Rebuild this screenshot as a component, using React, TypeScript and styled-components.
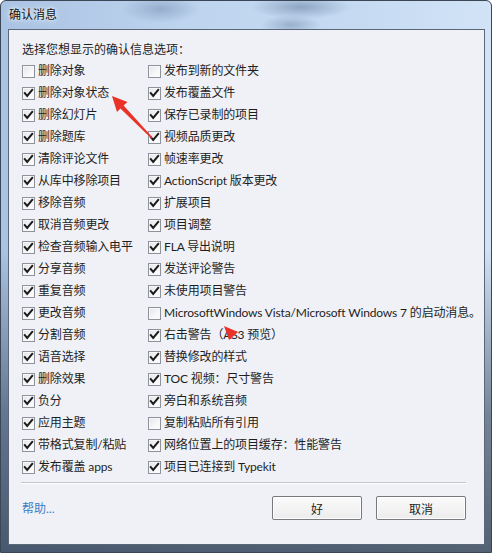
import styled, { createGlobalStyle } from "styled-components";

const GlobalStyle = createGlobalStyle`
  html, body {
    margin: 0;
    padding: 0;
    background: #ffffff;
  }
  * {
    box-sizing: border-box;
  }
`;

type Option = { label: string; checked: boolean };

const leftOptions: Option[] = [
  { label: "删除对象", checked: false },
  { label: "删除对象状态", checked: true },
  { label: "删除幻灯片", checked: true },
  { label: "删除题库", checked: true },
  { label: "清除评论文件", checked: true },
  { label: "从库中移除项目", checked: true },
  { label: "移除音频", checked: true },
  { label: "取消音频更改", checked: true },
  { label: "检查音频输入电平", checked: true },
  { label: "分享音频", checked: true },
  { label: "重复音频", checked: true },
  { label: "更改音频", checked: true },
  { label: "分割音频", checked: true },
  { label: "语音选择", checked: true },
  { label: "删除效果", checked: true },
  { label: "负分", checked: true },
  { label: "应用主题", checked: true },
  { label: "带格式复制/粘贴", checked: true },
  { label: "发布覆盖 apps", checked: true },
];

const rightOptions: Option[] = [
  { label: "发布到新的文件夹", checked: false },
  { label: "发布覆盖文件", checked: true },
  { label: "保存已录制的项目", checked: true },
  { label: "视频品质更改", checked: true },
  { label: "帧速率更改", checked: true },
  { label: "ActionScript 版本更改", checked: true },
  { label: "扩展项目", checked: true },
  { label: "项目调整", checked: true },
  { label: "FLA 导出说明", checked: true },
  { label: "发送评论警告", checked: true },
  { label: "未使用项目警告", checked: true },
  { label: "MicrosoftWindows Vista/Microsoft Windows 7 的启动消息。", checked: false },
  { label: "右击警告（AS3 预览）", checked: true },
  { label: "替换修改的样式", checked: true },
  { label: "TOC 视频：尺寸警告", checked: true },
  { label: "旁白和系统音频", checked: true },
  { label: "复制粘贴所有引用", checked: false },
  { label: "网络位置上的项目缓存：性能警告", checked: true },
  { label: "项目已连接到 Typekit", checked: true },
];

const Window = styled.div`
  position: relative;
  width: 492px;
  height: 553px;
  display: flex;
  flex-direction: column;
  padding: 0 6px 7px 7px;
  border: 1px solid #3b4656;
  border-radius: 6px 6px 0 0;
  background:
    radial-gradient(ellipse 40px 14px at 160px 8px, rgba(120, 145, 180, 0.55), transparent),
    radial-gradient(ellipse 50px 12px at 300px 6px, rgba(90, 115, 150, 0.5), transparent),
    radial-gradient(ellipse 30px 10px at 290px 24px, rgba(90, 115, 150, 0.4), transparent),
    linear-gradient(180deg, rgba(0, 0, 0, 0) 0%, rgba(0, 0, 0, 0) 45%, rgba(40, 55, 75, 0.55) 75%, rgba(30, 42, 60, 0.7) 100%),
    linear-gradient(90deg, #aac3e3 0%, #bfd5ef 40%, #c6dbf2 75%, #d2e3f6 100%);
  font-family: Lato, "Noto Sans CJK SC", sans-serif;
  font-size: 12px;
  color: #1e1e1e;
`;

const TitleBar = styled.div`
  height: 28px;
  display: flex;
  align-items: center;
  padding-left: 1px;
`;

const Title = styled.span`
  font-size: 12px;
  line-height: 16px;
  color: #111;
  text-shadow: 0 0 6px rgba(255, 255, 255, 0.9), 0 0 3px rgba(255, 255, 255, 0.9);
`;

const Client = styled.div`
  flex: 1;
  display: flex;
  flex-direction: column;
  border: 1px solid #5b6777;
  background: #f0f1f6;
  padding: 12px 18px 0 13px;
`;

const Prompt = styled.div`
  line-height: 16px;
  height: 16px;
`;

const Options = styled.div`
  margin-top: 2px;
  display: grid;
  grid-template-columns: 126px 1fr;
  grid-auto-flow: column;
  grid-template-rows: repeat(19, 22px);
`;

const Row = styled.label`
  display: flex;
  align-items: center;
  gap: 3px;
  white-space: nowrap;
  line-height: 16px;
  letter-spacing: -0.15px;
`;

const Box = styled.span`
  flex: none;
  width: 13px;
  height: 13px;
  border: 1px solid #8e929b;
  background: linear-gradient(135deg, #e3e4e8 0%, #f7f7f9 60%, #ffffff 100%);
  box-shadow: inset 0 0 0 1px #f8f8fa;
  display: flex;
  align-items: center;
  justify-content: center;
`;

const Separator = styled.div`
  margin: 4px 0 0 -1px;
  height: 2px;
  border-top: 1px solid #c3c4cb;
  border-bottom: 1px solid #ffffff;
`;

const Footer = styled.div`
  margin-top: 12px;
  display: flex;
  align-items: center;
  justify-content: space-between;
  height: 24px;
`;

const HelpLink = styled.a`
  color: #3b7bc6;
  text-decoration: none;
  line-height: 16px;
  margin-top: 1px;
`;

const Buttons = styled.div`
  display: flex;
  gap: 14px;
`;

const Button = styled.button`
  width: 90px;
  height: 24px;
  border: 1px solid #77797e;
  border-radius: 2px;
  background: linear-gradient(180deg, #fbfbfb 0%, #f3f3f3 50%, #ececec 100%);
  box-shadow: inset 0 0 0 1px #fdfdfd;
  font-family: Lato, "Noto Sans CJK SC", sans-serif;
  font-size: 12px;
  color: #1e1e1e;
  padding: 0;
`;

const Annotations = styled.svg`
  position: absolute;
  left: -1px;
  top: -1px;
  pointer-events: none;
`;

const Check = () => (
  <svg width="11" height="11" viewBox="0 0 11 11">
    <path d="M1.8 5.2 L4.2 8 L9.2 2" fill="none" stroke="#1b1b1b" strokeWidth="2" strokeLinecap="square" />
  </svg>
);

const OptionRow = ({ option }: { option: Option }) => (
  <Row>
    <Box>{option.checked && <Check />}</Box>
    <span>{option.label}</span>
  </Row>
);

export default function App() {
  return (
    <>
      <GlobalStyle />
      <Window>
        <TitleBar>
          <Title>确认消息</Title>
        </TitleBar>
        <Client>
          <Prompt>选择您想显示的确认信息选项：</Prompt>
          <Options>
            {leftOptions.map((o) => (
              <OptionRow key={o.label} option={o} />
            ))}
            {rightOptions.map((o) => (
              <OptionRow key={o.label} option={o} />
            ))}
          </Options>
          <Separator />
          <Footer>
            <HelpLink href="#">帮助...</HelpLink>
            <Buttons>
              <Button>好</Button>
              <Button>取消</Button>
            </Buttons>
          </Footer>
        </Client>
        <Annotations width="492" height="553" viewBox="0 0 492 553">
          <polygon
            points="112,96 127.5,102 123.6,105.6 152.6,137.4 151.4,138.6 120.4,108.6 117,112"
            fill="#ea3228"
          />
          <polygon points="224,326 238,332 229,340" fill="#ea3228" />
        </Annotations>
      </Window>
    </>
  );
}
